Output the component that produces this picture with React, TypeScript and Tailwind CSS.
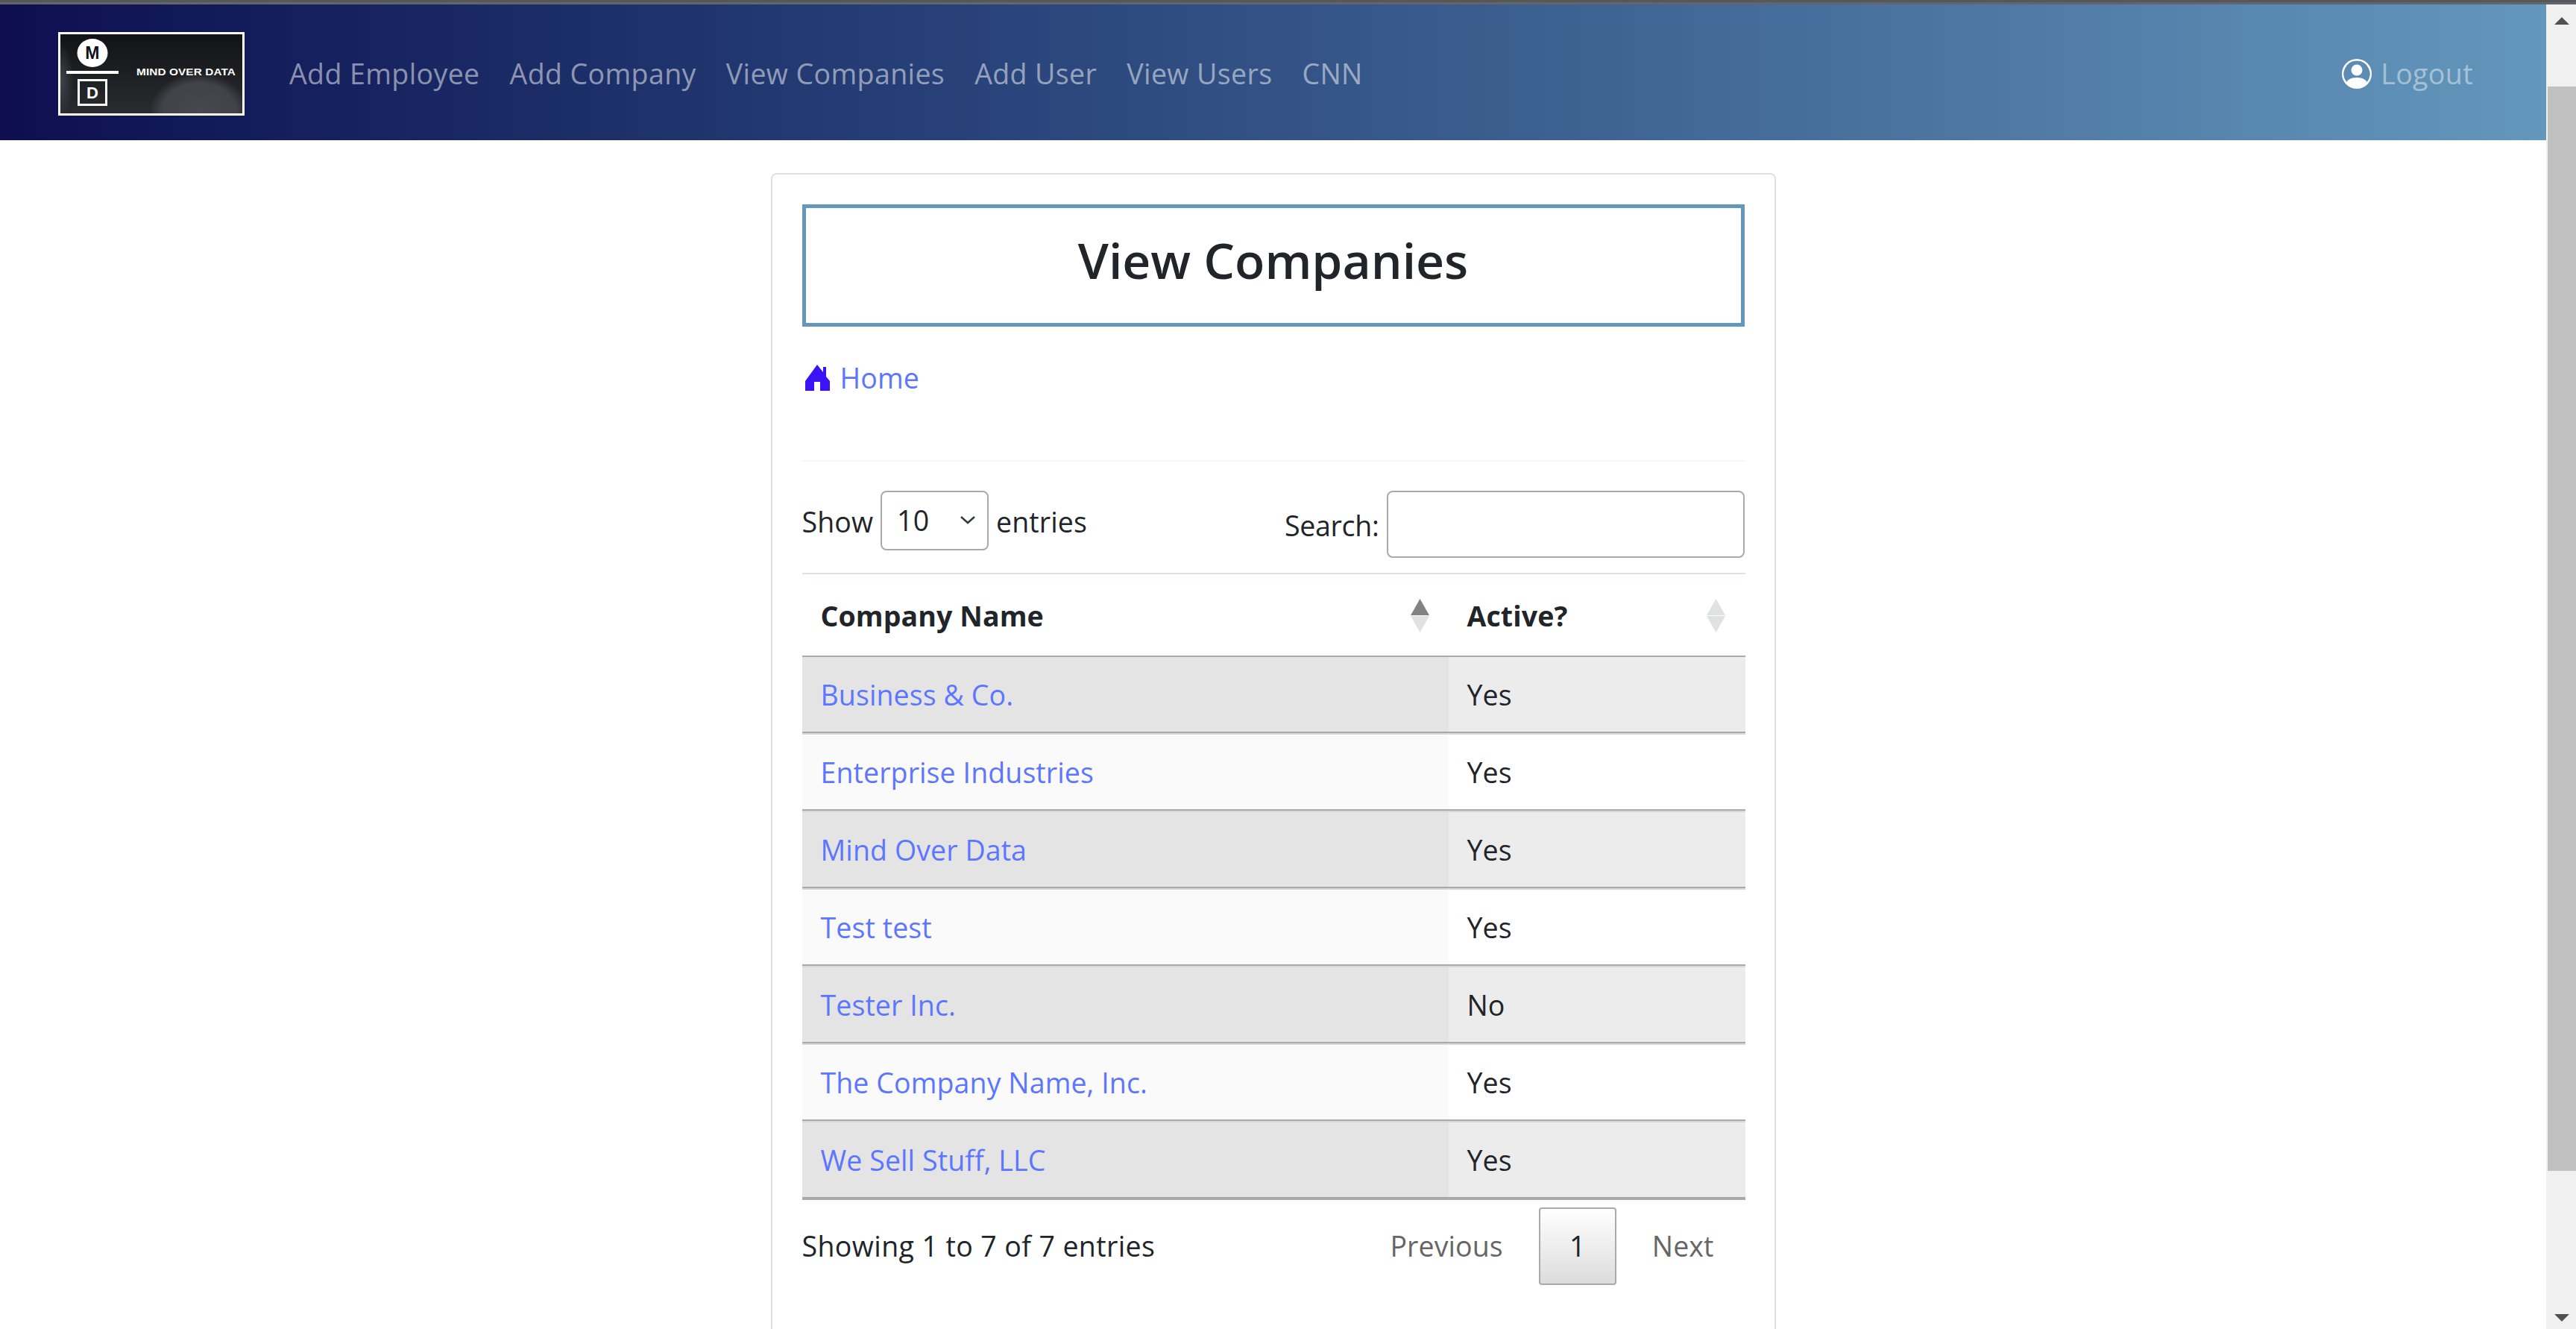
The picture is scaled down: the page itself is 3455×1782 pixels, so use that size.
import { BsPersonCircle } from 'react-icons/bs';

const NAV_LINKS = ['Add Employee', 'Add Company', 'View Companies', 'Add User', 'View Users', 'CNN'];

const COMPANIES = [
  { name: 'Business & Co.', active: 'Yes' },
  { name: 'Enterprise Industries', active: 'Yes' },
  { name: 'Mind Over Data', active: 'Yes' },
  { name: 'Test test', active: 'Yes' },
  { name: 'Tester Inc.', active: 'No' },
  { name: 'The Company Name, Inc.', active: 'Yes' },
  { name: 'We Sell Stuff, LLC', active: 'Yes' },
];

function Logo() {
  return (
    <svg width="250" height="112" viewBox="0 0 244 106" className="shrink-0 border-[3px] border-white">
      <defs>
        <linearGradient id="logoBg" x1="0" y1="0" x2="0" y2="1">
          <stop offset="0" stopColor="#121315" />
          <stop offset="1" stopColor="#2a2b2f" />
        </linearGradient>
        <radialGradient id="logoBlob" cx="0.5" cy="0.5" r="0.5">
          <stop offset="0" stopColor="#47484f" />
          <stop offset="0.75" stopColor="#424349" />
          <stop offset="1" stopColor="#424349" stopOpacity="0" />
        </radialGradient>
        <radialGradient id="logoGlow" cx="0.5" cy="0.5" r="0.5">
          <stop offset="0" stopColor="#44454b" />
          <stop offset="1" stopColor="#44454b" stopOpacity="0" />
        </radialGradient>
      </defs>
      <rect width="244" height="106" fill="url(#logoBg)" />
      <ellipse cx="186" cy="104" rx="66" ry="52" fill="url(#logoBlob)" />
      <ellipse cx="0" cy="62" rx="18" ry="50" fill="url(#logoGlow)" />
      <ellipse cx="43" cy="25" rx="20.5" ry="19" fill="#fff" />
      <text x="43" y="32.5" textAnchor="middle" fontFamily="Liberation Sans" fontWeight="700" fontSize="23" fill="#111">M</text>
      <rect x="8" y="49" width="70" height="4" fill="#fff" />
      <rect x="24.5" y="61.5" width="37" height="33" fill="none" stroke="#fff" strokeWidth="3" />
      <text x="43" y="86" textAnchor="middle" fontFamily="Liberation Sans" fontWeight="700" fontSize="22" fill="#fff">D</text>
      <text x="102" y="55" textLength="133" lengthAdjust="spacingAndGlyphs" fontFamily="Liberation Sans" fontWeight="700" fontSize="13.5" fill="#fff">MIND OVER DATA</text>
    </svg>
  );
}

function HomeIcon() {
  return (
    <svg width="33" height="35" viewBox="0 0 33 35" className="shrink-0">
      <path
        fill="#3a14f5"
        fillRule="evenodd"
        d="M16 0 L24 10 V3 H28 V16 L33 22 V35 H20 V23 H12 V35 H0 V22 Z"
      />
    </svg>
  );
}

function SortArrows({ active }: { active?: boolean }) {
  return (
    <span className="flex flex-col gap-[1px] shrink-0">
      <svg width="25" height="22" viewBox="0 0 25 22">
        <path d="M12.5 0 L25 22 H0 Z" fill={active ? '#808285' : '#e0e2e2'} />
      </svg>
      <svg width="25" height="22" viewBox="0 0 25 22">
        <path d="M0 0 H25 L12.5 22 Z" fill="#e0e2e2" />
      </svg>
    </span>
  );
}

export default function App() {
  return (
    <div className="h-screen flex flex-col overflow-hidden bg-white text-[#212529] font-['Open_Sans',sans-serif] text-[37.5px] tracking-[0.1px]">
      <div className="h-[6px] shrink-0 bg-[#62666a] border-t-[3px] border-[#55585a]" />

      <div className="flex-1 flex min-h-0">
        <div className="flex-1 min-w-0 overflow-hidden">
          {/* Navbar */}
          <nav className="h-[182px] flex items-center pt-[4px] pl-[78px] pr-[98px] bg-gradient-to-r from-[#0e0e50] to-[#6497bc]">
            <Logo />
            <div className="flex gap-[40px] ml-[60px] text-white/50 tracking-[0.4px]">
              {NAV_LINKS.map((l) => (
                <a key={l}>{l}</a>
              ))}
            </div>
            <a className="ml-auto flex items-center gap-[12px] text-white/45 tracking-[0.4px]">
              <BsPersonCircle size={40} className="text-white" />
              Logout
            </a>
          </nav>

          {/* Card */}
          <div className="w-[1348px] mx-auto mt-[44px] border-2 border-[#e0e0e0] rounded-[8px] px-[40px] pt-[40px] pb-[80px]">
            <div className="h-[164px] border-[5px] border-[#6497bc] flex items-center justify-center pb-[16px]">
              <h1 className="text-[66px] font-semibold tracking-[0px]">View Companies</h1>
            </div>

            <a className="flex items-center gap-[14px] mt-[51px] pl-[4px] h-[35px] text-[#5c76ff]">
              <HomeIcon />
              <span className="mt-[2px]">Home</span>
            </a>

            <hr className="mt-[93px] border-t-2 border-[#f6f6f6]" />

            {/* Table controls */}
            <div className="flex justify-between mt-[39px] h-[110px]">
              <label className="flex items-center gap-[10px] h-[80px]">
                <span className="mt-[4px]">Show</span>
                <span className="relative w-[145px] h-[80px] flex items-center pl-[20px] border-2 border-[#aaa] rounded-[8px]">
                  10
                  <svg width="24" height="14" viewBox="0 0 24 14" className="absolute right-[14px] top-[30px]">
                    <path d="M3 3 L12 11 L21 3" fill="none" stroke="#343a40" strokeWidth="2.5" />
                  </svg>
                </span>
                <span className="mt-[4px]">entries</span>
              </label>
              <label className="flex items-center gap-[10px] h-[90px]">
                <span className="mt-[4px] tracking-[-0.3px]">Search:</span>
                <input className="w-[480px] h-[90px] border-2 border-[#aaa] rounded-[8px] bg-white" />
              </label>
            </div>

            {/* Companies table */}
            <table className="w-[1265px] table-fixed border-separate border-spacing-0 border-t-2 border-[#dee2e6]">
              <thead>
                <tr className="h-[111px]">
                  <th className="w-[867px] pl-[25px] pr-[26px] pt-[2px] text-left font-bold border-b-2 border-[#aaa]">
                    <div className="flex items-center justify-between">
                      <span className="pt-[2px]">Company Name</span>
                      <SortArrows active />
                    </div>
                  </th>
                  <th className="pl-[25px] pr-[27px] pt-[2px] text-left font-bold border-b-2 border-[#aaa]">
                    <div className="flex items-center justify-between">
                      <span className="pt-[2px]">Active?</span>
                      <SortArrows />
                    </div>
                  </th>
                </tr>
              </thead>
              <tbody>
                {COMPANIES.map((c, i) => {
                  const odd = i % 2 === 0;
                  const last = i === COMPANIES.length - 1;
                  const edges = `${i > 0 ? 'border-t-2 border-t-[#d8d8d8]' : ''} ${last ? 'border-b-4' : 'border-b-2'} border-b-[#aaa]`;
                  return (
                    <tr key={c.name} className={i === 0 ? 'h-[102px]' : last ? 'h-[106px]' : 'h-[104px]'}>
                      <td className={`px-[25px] pt-[3px] ${edges} ${odd ? 'bg-[#e4e4e5]' : 'bg-[#fafafa]'} text-[#5c76ff]`}>
                        {c.name}
                      </td>
                      <td className={`px-[25px] pt-[3px] ${edges} ${odd ? 'bg-[#ececec]' : 'bg-white'}`}>
                        {c.active}
                      </td>
                    </tr>
                  );
                })}
              </tbody>
            </table>

            {/* Footer */}
            <div className="flex items-start justify-between mt-[10px]">
              <div className="mt-[24px] tracking-[0.4px]">Showing 1 to 7 of 7 entries</div>
              <div className="flex items-center text-[#666]">
                <a className="pr-[48px]">Previous</a>
                <a className="w-[104px] h-[104px] flex items-center justify-center border-2 border-[#aaa] rounded-[4px] bg-gradient-to-b from-white to-[#dcdcdc] text-[#212529]">
                  1
                </a>
                <a className="pl-[48px] pr-[41px]">Next</a>
              </div>
            </div>
          </div>
        </div>

        {/* Scrollbar */}
        <div className="w-[40px] shrink-0 bg-[#f0f0f0] flex flex-col items-center">
          <svg width="20" height="10" viewBox="0 0 20 10" className="mt-[17px] ml-[2px]">
            <path d="M10 0 L20 10 H0 Z" fill="#505050" />
          </svg>
          <div className="ml-[2px] w-[38px] h-[1454px] mt-[83px] bg-[#c1c1c1]" />
          <svg width="20" height="10" viewBox="0 0 20 10" className="mt-[192px] ml-[2px]">
            <path d="M0 0 H20 L10 10 Z" fill="#505050" />
          </svg>
        </div>
      </div>
    </div>
  );
}
